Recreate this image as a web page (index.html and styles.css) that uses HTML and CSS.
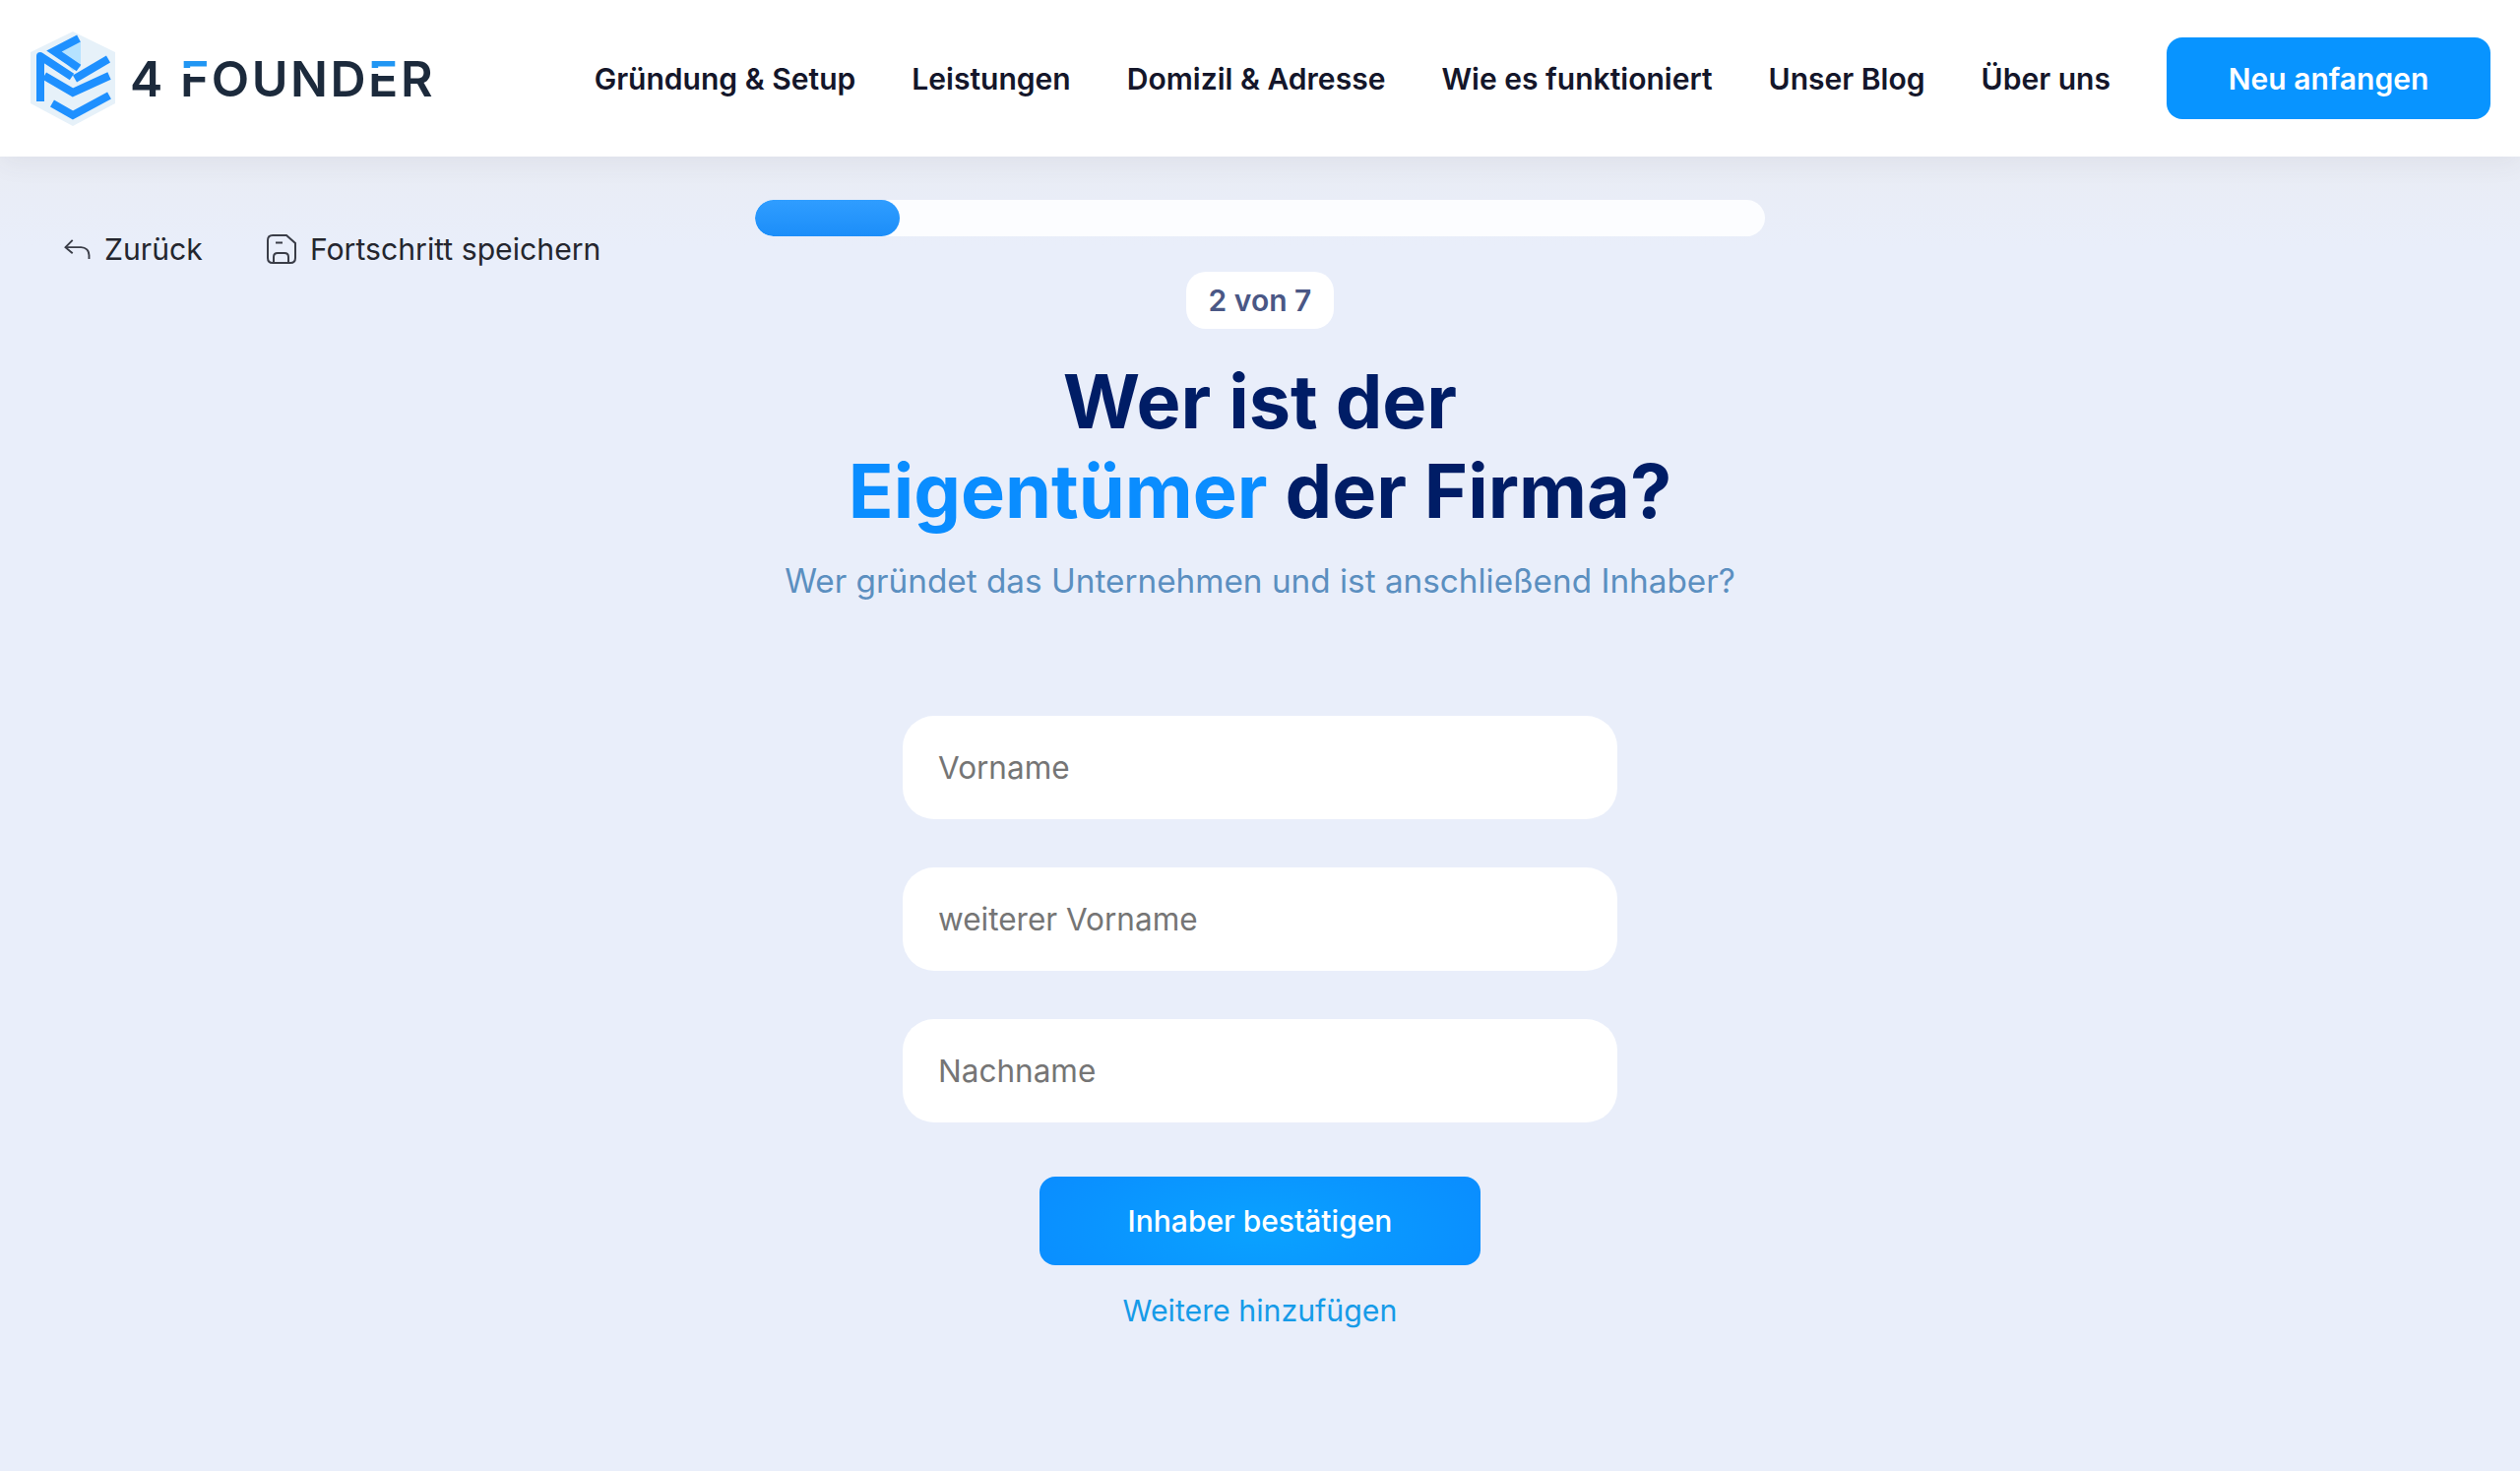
FILE: index.html
```html
<!DOCTYPE html>
<html lang="de">
<head>
<meta charset="utf-8">
<title>4 Founder</title>
<link rel="stylesheet" href="styles.css">
</head>
<body>
<header class="site-header">
  <a class="logo" href="#">
    <svg class="logo-mark" viewBox="0 0 88 96" aria-hidden="true">
      <polygon class="hex" points="44,0 87,21 87,73 44,96 1,73 1,21"/>
      <polygon class="face" points="35,18 52,10 52,36 44,40 30,24"/>
      <path class="strip" d="M50 7 L25 20 L50 37"/>
      <path class="strip" d="M80 28 L46 48"/>
      <path class="strip round" d="M11 71 V25 L43 46"/>
      <path class="strip" d="M15 45 L44 62 L81 45"/>
      <path class="strip" d="M23 73 L44 85 L81 65"/>
    </svg>
    <span class="wordmark">4 <span class="bar">F</span>OUND<span class="bar">E</span>R</span>
  </a>
  <nav class="main-nav">
    <a href="#">Gründung &amp; Setup</a>
    <a href="#">Leistungen</a>
    <a href="#">Domizil &amp; Adresse</a>
    <a href="#">Wie es funktioniert</a>
    <a href="#">Unser Blog</a>
    <a href="#">Über uns</a>
  </nav>
  <a class="cta" href="#">Neu anfangen</a>
</header>
<main class="wizard">
  <div class="tools">
    <a class="tool" href="#">
      <svg class="icon-back" viewBox="0 0 28 24" aria-hidden="true"><path d="M9 2 L1.5 9.5 L9 16"/><path d="M1.5 9.5 H18 C23 9.500 26.500 13 26.500 18 V22"/></svg>
      Zurück
    </a>
    <a class="tool" href="#">
      <svg class="icon-save" viewBox="0 0 30 30" aria-hidden="true"><path d="M6 1 H20 L29 9 V24 C29 27 27 29 24 29 H6 C3 29 1 27 1 24 V6 C1 3 3 1 6 1 Z"/><path d="M9 8.500 H16"/><path d="M7 29 V23 C7 20 9 19 11 19 H18 C21 19 22 21 22 23 V29"/></svg>
      Fortschritt speichern
    </a>
  </div>
  <section class="step">
    <div class="progress"><div class="progress-fill"></div></div>
    <div class="badge">2 von 7</div>
    <h1>Wer ist der<br><span class="accent">Eigentümer</span> der Firma?</h1>
    <p class="lead">Wer gründet das Unternehmen und ist anschließend Inhaber?</p>
    <form class="owner-form">
      <input type="text" placeholder="Vorname">
      <input type="text" placeholder="weiterer Vorname">
      <input type="text" placeholder="Nachname">
      <button type="button" class="confirm">Inhaber bestätigen</button>
      <a class="add-more" href="#">Weitere hinzufügen</a>
    </form>
  </section>
</main>
</body>
</html>
```
FILE: styles.css
```css
* { box-sizing: border-box; }
html, body { margin: 0; }
body {
  min-height: 1494px;
  background: #e9eefa;
  font-family: Inter, "Liberation Sans", sans-serif;
  color: #14162a;
}
a { text-decoration: none; color: inherit; }

.site-header {
  height: 159px;
  background: #fff;
  display: flex;
  align-items: center;
  padding: 0 30px;
  box-shadow: 0 8px 24px rgba(60, 70, 90, .06);
  position: relative;
}
.logo { display: flex; align-items: center; gap: 14px; }
.logo-mark { width: 88px; height: 96px; display: block; }
.hex { fill: #e6f1f9; }
.face { fill: #b5e2ff; }
.strip { fill: none; stroke: #1e90ff; stroke-width: 8; stroke-linejoin: miter; }
.round { stroke-linejoin: round; }
.wordmark {
  font-size: 50px;
  font-weight: 600;
  letter-spacing: 2.500px;
  color: #1c2a3c;
  line-height: 1;
}
.bar {
  background: linear-gradient(#2196f3 0 31.500%, transparent 31.500% 41%, #1c2a3c 41%);
  -webkit-background-clip: text;
  background-clip: text;
  color: transparent;
}
.main-nav {
  display: flex;
  gap: 57px;
  margin-left: auto;
  font-size: 30.050px;
  font-weight: 600;
}
.cta {
  margin-left: 57px;
  width: 329px;
  height: 83px;
  border-radius: 16px;
  background: #0894ff;
  color: #fff;
  font-size: 30px;
  font-weight: 600;
  display: flex;
  align-items: center;
  justify-content: center;
}

.wizard {
  display: grid;
  grid-template-columns: 1fr 1026px 1fr;
  align-items: start;
  padding-top: 44px;
  background: linear-gradient(#e9ecf4, #e9eefa 90px);
}
.tools {
  display: flex;
  gap: 65px;
  padding: 32px 0 0 65px;
  font-size: 30.200px;
  color: #24262e;
  white-space: nowrap;
}
.tool { display: flex; align-items: center; gap: 14px; }
.icon-back, .icon-save { fill: none; stroke: #3a3d47; stroke-width: 2; flex: none; }
.icon-back { width: 27px; height: 23px; }
.icon-save { width: 30px; height: 30px; }

.step { grid-column: 2; display: flex; flex-direction: column; align-items: center; }
.progress { width: 100%; height: 37px; background: #fcfdff; border-radius: 19px; overflow: hidden; }
.progress-fill {
  width: 147px;
  height: 100%;
  border-radius: 19px;
  background: linear-gradient(#2f9dff, #1c8ef9);
}
.badge {
  margin-top: 36px;
  width: 150px;
  height: 58px;
  border-radius: 20px;
  background: #fff;
  color: #4a5785;
  font-size: 30px;
  font-weight: 600;
  display: flex;
  align-items: center;
  justify-content: center;
}
h1 {
  margin: 28px 0 0;
  font-size: 75.600px;
  line-height: 91px;
  font-weight: 700;
  color: #001d66;
  text-align: center;
}
.accent { color: #0a8dff; }
.lead {
  margin: 25px 0 0;
  font-size: 33.300px;
  line-height: 42px;
  color: #5b8fc0;
  white-space: nowrap;
}
.owner-form {
  margin-top: 116px;
  width: 726px;
  display: flex;
  flex-direction: column;
  align-items: center;
}
.owner-form input {
  width: 100%;
  height: 105px;
  margin-bottom: 49px;
  padding: 0 36px;
  border: 0;
  border-radius: 32px;
  background: #fff;
  font: 400 31.500px Inter, "Liberation Sans", sans-serif;
  color: #222;
  outline: none;
}
.owner-form input::placeholder { color: #757575; opacity: 1; }
.owner-form input:nth-of-type(3) { margin-bottom: 55px; }
.confirm {
  width: 448px;
  height: 90px;
  border: 0;
  border-radius: 16px;
  background: radial-gradient(ellipse 60% 120% at 50% 60%, #0aa2ff, #0a8cff);
  color: #fff;
  font: 500 30px Inter, "Liberation Sans", sans-serif;
}
.add-more {
  margin-top: 26px;
  font-size: 30.300px;
  line-height: 40px;
  color: #169be8;
}
```
